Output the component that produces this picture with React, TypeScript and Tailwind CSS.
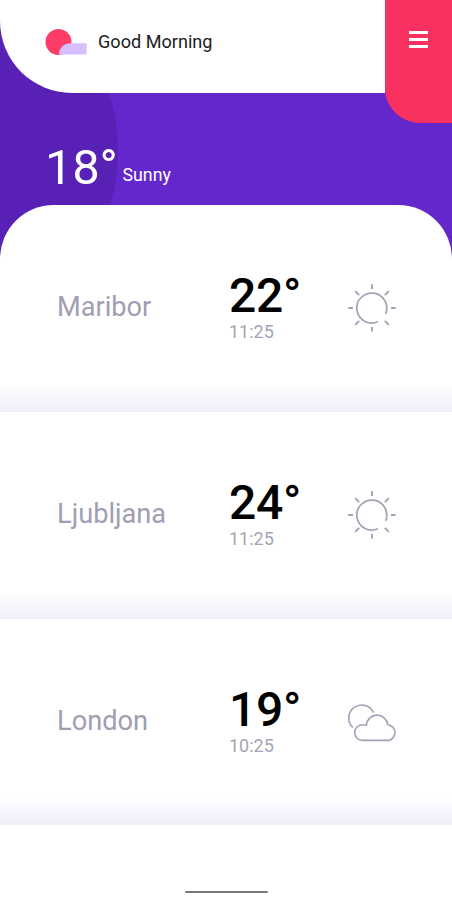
import type { ReactNode } from 'react';

const SunIcon = () => (
  <svg className="h-12 w-12" viewBox="0 0 48 48" fill="none" stroke="#a3a1b5">
    <path d="M29.8 37.8A15 15 0 1 1 37.6 29.9" strokeWidth="1.7" />
    <path
      d="M24 0.3v4.6M24 43v4.6M0.3 24h4.6M43 24h4.6M7.2 7.2l4 4M40.8 7.2l-4 4M7.2 40.8l4-4M40.8 40.8l-4-4"
      strokeWidth="1.9"
    />
  </svg>
);

const CloudIcon = () => (
  <svg className="h-12 w-[50px]" viewBox="0 0 50 48" fill="none" stroke="#a3a1b5" strokeWidth="1.6">
    <path d="M4.8 29.4A13 13 0 1 1 25.6 14.6" />
    <path d="M14.6 42.4a7.8 7.8 0 0 1-.3-15.6 1.5 1.5 0 0 1 .6 0l3.4.3a10.8 10.8 0 0 1 21.5-.4 8 8 0 0 1 1.2 15.7z" />
  </svg>
);

const cities: { name: string; temp: number; time: string; icon: ReactNode }[] = [
  { name: 'Maribor', temp: 22, time: '11:25', icon: <SunIcon /> },
  { name: 'Ljubljana', temp: 24, time: '11:25', icon: <SunIcon /> },
  { name: 'London', temp: 19, time: '10:25', icon: <CloudIcon /> },
];

function Header() {
  return (
    <header className="relative z-10 flex h-[93px] items-start">
      <div className="flex h-full flex-1 items-start rounded-bl-[72px] bg-white pl-[45px] pt-7">
        <svg className="h-7 w-[42px]" viewBox="0 0 42 28">
          <circle cx="13.5" cy="14" r="13" fill="#fc3d67" />
          <path d="M14 26.6c0-6.5 5-11.3 11.5-11.3H41.7v11.3z" fill="#d7bfff" />
        </svg>
        <span className="ml-[11px] text-[18.1px] leading-7 text-[#1c1c1c]">Good Morning</span>
      </div>
      <button
        aria-label="Menu"
        className="flex h-[123px] w-[67px] flex-col items-center gap-1 rounded-bl-[35px] bg-[#f83160] pt-[31px]"
      >
        <span className="h-[3px] w-[19px] bg-white" />
        <span className="h-[3px] w-[19px] bg-white" />
        <span className="h-[3px] w-[19px] bg-white" />
      </button>
    </header>
  );
}

export default function App() {
  return (
    <div className="relative flex h-[900px] w-[452px] flex-col overflow-hidden bg-white font-[Roboto,sans-serif]">
      {/* purple backdrop with the big darker circle */}
      <div className="absolute inset-x-0 top-0 h-[270px] overflow-hidden bg-[#6327cc]">
        <div className="absolute -left-[262px] -top-[39px] h-[380px] w-[380px] rounded-full bg-[#5820b5]" />
      </div>

      <Header />

      <section className="relative flex h-28 items-start pl-[45px] pt-[45px] text-white">
        <span className="text-[49px] leading-[60px] tracking-[-0.3px]">18°</span>
        <span className="ml-[5px] pt-[26px] text-[17.8px] leading-[22px]">Sunny</span>
      </section>

      <main className="relative flex-1 rounded-t-[54px] bg-white">
        {cities.map((city) => (
          <div key={city.name} className="flex h-[206.8px] flex-col">
            <div className="flex flex-1 items-start pl-[57px] pt-[66px]">
              <span className="w-[172px] pt-4 text-[27.2px] leading-[40px] text-[#a09eb2]">{city.name}</span>
              <div className="w-[119px]">
                <div className="text-[48px] font-medium leading-[50px] tracking-[-0.3px] text-black">{city.temp}°</div>
                <div className="text-[18px] leading-[22px] text-[#a5a4b3]">{city.time}</div>
              </div>
              <div className="pt-[13px]">{city.icon}</div>
            </div>
            <div className="h-7 shrink-0 bg-linear-to-b from-white to-[#f0eefb]" />
          </div>
        ))}
      </main>

      <div className="absolute bottom-[7px] left-[185px] h-[2.5px] w-[83px] rounded-full bg-[#777]" />
    </div>
  );
}
